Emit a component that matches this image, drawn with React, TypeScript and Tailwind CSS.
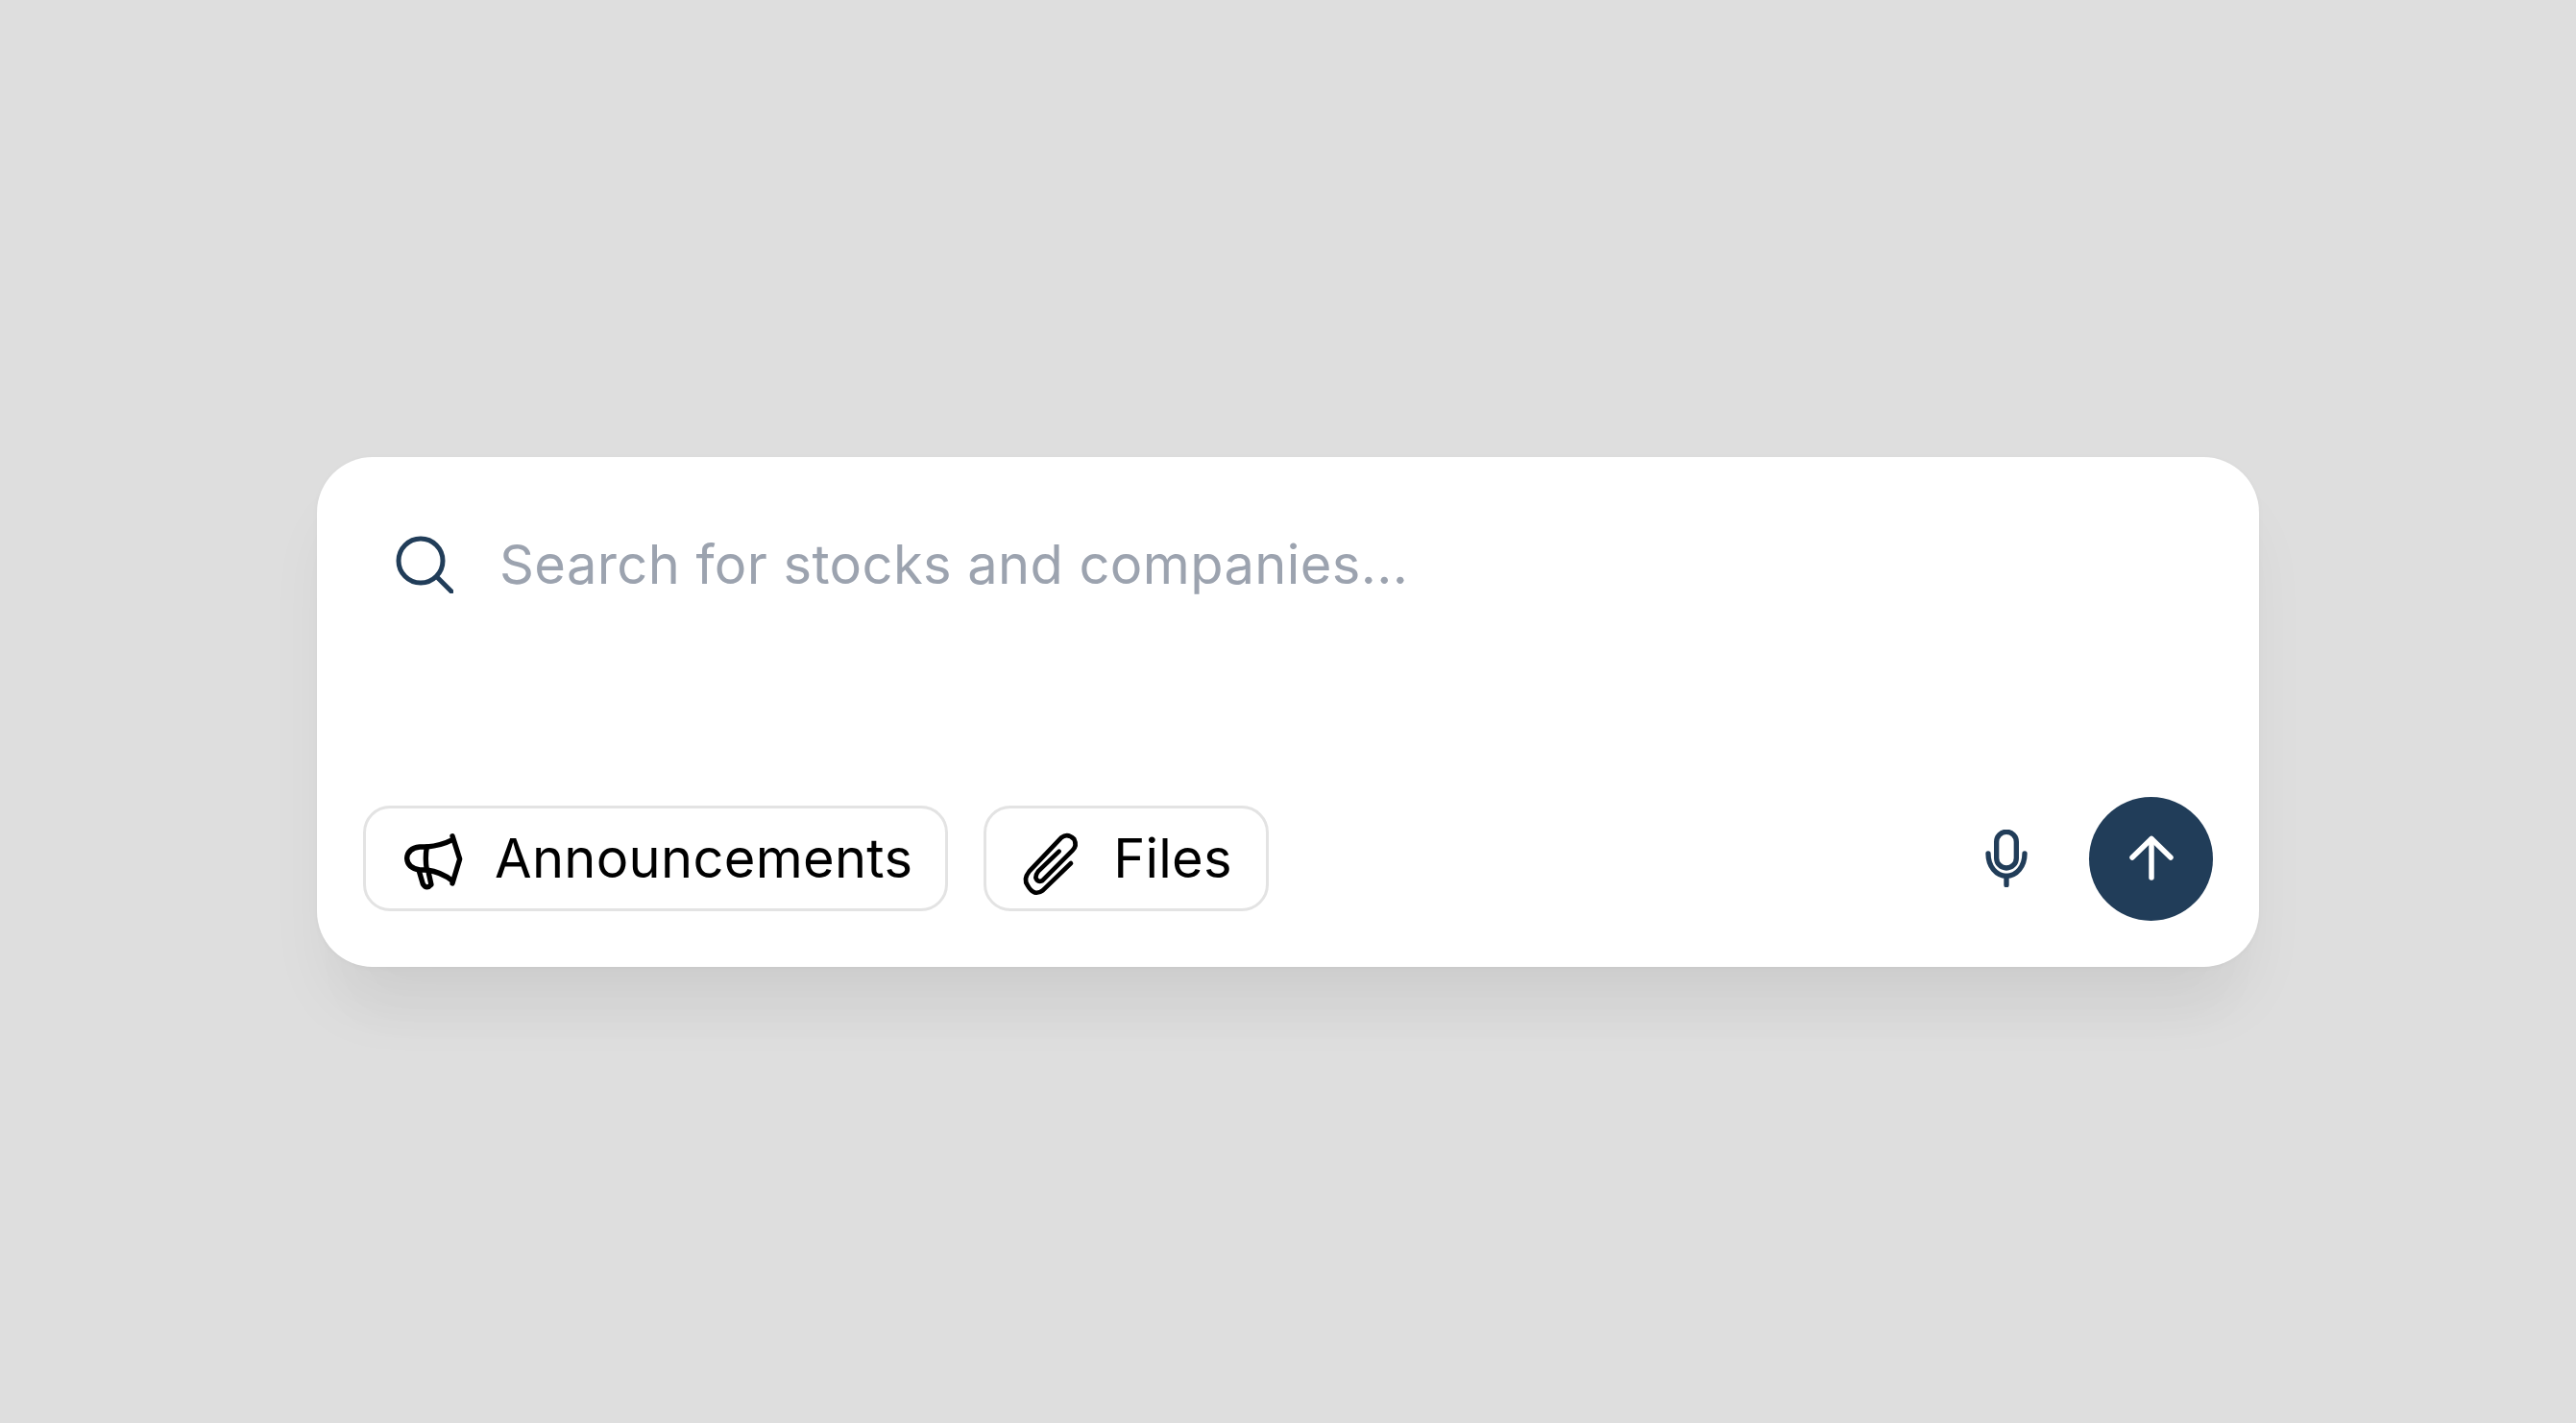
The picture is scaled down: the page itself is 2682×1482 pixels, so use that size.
const App = () => {
    return (
        <div className="flex h-[1482px] w-full items-center justify-center bg-[#dedede] font-['Inter',sans-serif]">
            <div className="flex h-[531px] w-[2022px] flex-col justify-between rounded-[58px] bg-white pt-[78px] pr-[48px] pb-[48px] pl-[48px] shadow-[0_1px_6px_rgba(0,0,0,0.03),0_50px_70px_-12px_rgba(0,0,0,0.055),0_80px_60px_-36px_rgba(0,0,0,0.025)]">
                {/* Search line */}
                <div className="flex items-center gap-[48px] pl-[34px]">
                    <svg className="h-[60px] w-[60px] shrink-0" viewBox="0 0 60 60" fill="none" stroke="#213d59" strokeWidth="5" strokeLinecap="round">
                        <circle cx="26" cy="26" r="23" />
                        <path d="M43 43 L58 58" />
                    </svg>
                    <p className="text-[56px] leading-[68px] tracking-[0.4px] text-[#9ca3af]">Search for stocks and companies...</p>
                </div>

                {/* Bottom bar */}
                <div className="flex items-center justify-between">
                    <div className="flex items-center gap-[37px]">
                        <button className="flex h-[110px] items-center gap-[24px] rounded-[28px] border-[3px] border-[#e3e3e3] pr-[34px] pl-[30px] text-[56px] tracking-[0.3px] text-black">
                            <svg className="h-[80px] w-[80px] shrink-0" viewBox="0 0 240 240" fill="none" stroke="black" strokeWidth="16" strokeLinecap="round" strokeLinejoin="round">
                                <path d="M180 50 L203 122 L180 198" />
                                <path d="M180 62 Q145 80 100 84 L78 84 Q40 88 38 120 Q40 150 78 156 L100 156 Q145 162 180 190" />
                                <path d="M100 84 Q94 120 100 156" />
                                <path d="M76 160 L88 200 Q100 218 114 202 L106 166" />
                            </svg>
                            Announcements
                        </button>
                        <button className="flex h-[110px] items-center gap-[24px] rounded-[28px] border-[3px] border-[#e3e3e3] pr-[35px] pl-[28px] text-[56px] tracking-[0.2px] text-black">
                            <svg className="h-[80px] w-[80px] shrink-0" viewBox="0 0 240 240" fill="none" stroke="black" strokeWidth="14" strokeLinecap="round" strokeLinejoin="round">
                                <path d="M180 135 L92 220 Q65 240 45 205 Q30 185 50 160 L150 55 Q170 40 190 60 Q200 80 185 95 L90 190 Q75 195 70 180 Q70 170 78 160 L143 98" />
                            </svg>
                            Files
                        </button>
                    </div>

                    <div className="flex items-center gap-[62px]">
                        <svg className="h-[60px] w-[48px] shrink-0" viewBox="0 0 144 180" fill="none" stroke="#213d59" strokeWidth="16" strokeLinecap="round">
                            <rect x="41" y="7" width="62" height="113" rx="31" />
                            <path d="M15 75 C15 115 40 145 72 145 C104 145 129 115 129 75" />
                            <path d="M72 145 L72 173" />
                        </svg>
                        <button className="flex h-[129px] w-[129px] items-center justify-center rounded-full bg-[#213d59]">
                            <svg className="h-[56px] w-[56px]" viewBox="0 0 56 56" fill="none" stroke="white" strokeWidth="5.5" strokeLinecap="round" strokeLinejoin="round">
                                <path d="M8 27 L28 7.5 L48 27" />
                                <path d="M28 8 L28 48" />
                            </svg>
                        </button>
                    </div>
                </div>
            </div>
        </div>
    );
};

export default App;
